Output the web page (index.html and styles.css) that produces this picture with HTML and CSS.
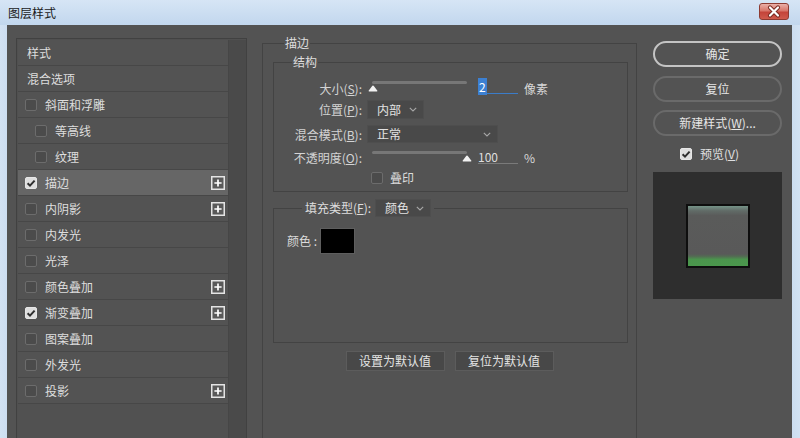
FILE: index.html
```html
<!DOCTYPE html>
<html lang="zh-CN">
<head>
<meta charset="utf-8">
<title>图层样式</title>
<link rel="stylesheet" href="styles.css">
</head>
<body>
<div class="window">
  <div class="titlebar">
    <span class="title">图层样式</span>
    <div class="close">
      <svg width="30" height="17" viewBox="0 0 30 17">
        <path d="M11 4.5 L19 12.5 M19 4.5 L11 12.5" stroke="#7a2a22" stroke-width="4.2" stroke-linecap="round"/>
        <path d="M11 4.5 L19 12.5 M19 4.5 L11 12.5" stroke="#ffffff" stroke-width="2.2" stroke-linecap="round"/>
      </svg>
    </div>
  </div>
  <div class="client">
    <div class="styles-panel">
      <ul class="style-list">
        <li class="row plain">样式</li>
        <li class="row plain">混合选项</li>
        <li class="row"><span class="cb"></span><span class="name">斜面和浮雕</span></li>
        <li class="row sub"><span class="cb"></span><span class="name">等高线</span></li>
        <li class="row sub"><span class="cb"></span><span class="name">纹理</span></li>
        <li class="row selected"><span class="cb checked"><svg width="12" height="12" viewBox="0 0 12 12"><path d="M2.6 6.2 L5 8.6 L9.6 3.6" fill="none" stroke="#2f2f2f" stroke-width="2"/></svg></span><span class="name">描边</span><span class="plus"><svg width="14" height="14" viewBox="0 0 14 14"><rect x="0.75" y="0.75" width="12.5" height="12.5" fill="#595959" stroke="#e4e4e4" stroke-width="1.5"/><path d="M7 3.4 V10.6 M3.4 7 H10.6" stroke="#ffffff" stroke-width="1.7"/></svg></span></li>
        <li class="row"><span class="cb"></span><span class="name">内阴影</span><span class="plus"><svg width="14" height="14" viewBox="0 0 14 14"><rect x="0.75" y="0.75" width="12.5" height="12.5" fill="#595959" stroke="#e4e4e4" stroke-width="1.5"/><path d="M7 3.4 V10.6 M3.4 7 H10.6" stroke="#ffffff" stroke-width="1.7"/></svg></span></li>
        <li class="row"><span class="cb"></span><span class="name">内发光</span></li>
        <li class="row"><span class="cb"></span><span class="name">光泽</span></li>
        <li class="row"><span class="cb"></span><span class="name">颜色叠加</span><span class="plus"><svg width="14" height="14" viewBox="0 0 14 14"><rect x="0.75" y="0.75" width="12.5" height="12.5" fill="#595959" stroke="#e4e4e4" stroke-width="1.5"/><path d="M7 3.4 V10.6 M3.4 7 H10.6" stroke="#ffffff" stroke-width="1.7"/></svg></span></li>
        <li class="row"><span class="cb checked"><svg width="12" height="12" viewBox="0 0 12 12"><path d="M2.6 6.2 L5 8.6 L9.6 3.6" fill="none" stroke="#2f2f2f" stroke-width="2"/></svg></span><span class="name">渐变叠加</span><span class="plus"><svg width="14" height="14" viewBox="0 0 14 14"><rect x="0.75" y="0.75" width="12.5" height="12.5" fill="#595959" stroke="#e4e4e4" stroke-width="1.5"/><path d="M7 3.4 V10.6 M3.4 7 H10.6" stroke="#ffffff" stroke-width="1.7"/></svg></span></li>
        <li class="row"><span class="cb"></span><span class="name">图案叠加</span></li>
        <li class="row"><span class="cb"></span><span class="name">外发光</span></li>
        <li class="row"><span class="cb"></span><span class="name">投影</span><span class="plus"><svg width="14" height="14" viewBox="0 0 14 14"><rect x="0.75" y="0.75" width="12.5" height="12.5" fill="#595959" stroke="#e4e4e4" stroke-width="1.5"/><path d="M7 3.4 V10.6 M3.4 7 H10.6" stroke="#ffffff" stroke-width="1.7"/></svg></span></li>
      </ul>
      <div class="scroll"></div>
    </div>

    <fieldset class="group outer">
      <legend class="lg-outer">描边</legend>
      <fieldset class="group inner">
        <legend class="lg-inner">结构</legend>
        <div class="form">
          <div class="frow r-size">
            <span class="lbl">大小(<u>S</u>):</span>
            <div class="slider"><span class="track"></span><span class="thumb" style="left:-4px"><svg width="10" height="7" viewBox="0 0 10 7"><path d="M5 0.5 Q5.6 0.5 6 1.2 L9.4 5.8 Q9.6 6.6 8.8 6.6 L1.2 6.6 Q0.4 6.6 0.6 5.8 L4 1.2 Q4.4 0.5 5 0.5 Z" fill="#f2f2f2"/></svg></span></div>
            <span class="num active"><span class="hl">2</span></span>
            <span class="unit">像素</span>
          </div>
          <div class="frow r-pos">
            <span class="lbl">位置(<u>P</u>):</span>
            <div class="select w-pos"><span>内部</span><svg width="8" height="5" viewBox="0 0 8 5"><path d="M0.8 0.8 L4 4 L7.2 0.8" fill="none" stroke="#a8a8a8" stroke-width="1.1"/></svg></div>
          </div>
          <div class="frow r-mode">
            <span class="lbl">混合模式(<u>B</u>):</span>
            <div class="select w-mode"><span>正常</span><svg width="8" height="5" viewBox="0 0 8 5"><path d="M0.8 0.8 L4 4 L7.2 0.8" fill="none" stroke="#a8a8a8" stroke-width="1.1"/></svg></div>
          </div>
          <div class="frow r-opacity">
            <span class="lbl">不透明度(<u>O</u>):</span>
            <div class="slider"><span class="track"></span><span class="thumb" style="left:90px"><svg width="10" height="7" viewBox="0 0 10 7"><path d="M5 0.5 Q5.6 0.5 6 1.2 L9.4 5.8 Q9.6 6.6 8.8 6.6 L1.2 6.6 Q0.4 6.6 0.6 5.8 L4 1.2 Q4.4 0.5 5 0.5 Z" fill="#f2f2f2"/></svg></span></div>
            <span class="num">100</span>
            <span class="unit">%</span>
          </div>
          <div class="frow r-over">
            <span class="cb"></span><span class="name">叠印</span>
          </div>
        </div>
      </fieldset>

      <fieldset class="group fill">
        <legend class="lg-fill"><span>填充类型(<u>F</u>):</span><div class="select w-fill"><span>颜色</span><svg width="8" height="5" viewBox="0 0 8 5"><path d="M0.8 0.8 L4 4 L7.2 0.8" fill="none" stroke="#a8a8a8" stroke-width="1.1"/></svg></div></legend>
        <div class="fill-body">
          <div class="color-row"><span>颜色 :</span><span class="swatch"></span></div>
        </div>
      </fieldset>

      <div class="defaults">
        <button class="btn-flat">设置为默认值</button>
        <button class="btn-flat">复位为默认值</button>
      </div>
    </fieldset>

    <div class="actions">
      <button class="pill primary">确定</button>
      <button class="pill">复位</button>
      <button class="pill">新建样式(<u>W</u>)...</button>
      <div class="preview-toggle"><span class="cb checked"><svg width="12" height="12" viewBox="0 0 12 12"><path d="M2.6 6.2 L5 8.6 L9.6 3.6" fill="none" stroke="#2f2f2f" stroke-width="2"/></svg></span><span class="name">预览(<u>V</u>)</span></div>
      <div class="preview"><div class="swatch-preview"></div></div>
    </div>
  </div>
</div>
</body>
</html>
```

FILE: styles.css
```css
* { box-sizing: border-box; }
html, body { margin: 0; padding: 0; }
body {
  width: 800px;
  height: 438px;
  overflow: hidden;
  font-family: "Noto Sans CJK SC", "Noto Sans", sans-serif;
  font-size: 12px;
  color: #dcdcdc;
}
u { text-decoration: underline; text-underline-offset: 1px; }

.window {
  width: 800px;
  height: 438px;
  display: flex;
  flex-direction: column;
  background: linear-gradient(90deg, #d2e2f3 0, #bfd4eb 3%, #bfd4eb 97%, #d2e2f3 100%);
}
.titlebar {
  height: 25px;
  flex: none;
  display: flex;
  align-items: center;
  justify-content: space-between;
  padding: 0 11px 0 8px;
  background: linear-gradient(#d6e5f5, #c2d7ee);
}
.title {
  color: #1a1a1a;
  font-size: 12px;
  line-height: 14px;
}
.close {
  width: 30px;
  height: 17px;
  margin-top: -3px;
  border: 1px solid #8e3b32;
  border-radius: 3px;
  background: linear-gradient(#eab0a8 0%, #d8766a 45%, #c4443a 55%, #cf5a4c 100%);
  display: flex;
}
.close svg { margin: -1px; }

.client {
  flex: 1;
  margin: 0 8px 0 7px;
  background: #535353;
  display: flex;
  align-items: flex-start;
  overflow: hidden;
}

/* left list */
.styles-panel {
  margin: 13px 0 0 9px;
  width: 231px;
  height: 420px;
  flex: none;
  border: 1px solid #414141;
  padding: 1px;
  display: flex;
  background: #505050;
}
.style-list {
  list-style: none;
  margin: 0;
  padding: 0;
  width: 210px;
  flex: none;
  background: #515151;
}
.scroll {
  width: 18px;
  flex: none;
  background: #4a4a4a;
  border-left: 1px solid #464646;
}
.row {
  height: 26px;
  display: flex;
  align-items: center;
  padding: 0 3px 0 7px;
  background: #535353;
  border-bottom: 1px solid #474747;
  color: #dedede;
  line-height: 16px;
}
.row.plain { padding-left: 9px; }
.row.sub { padding-left: 17px; }
.row.selected { background: #666666; }
.row .name { margin-left: 8px; flex: 1; }
.plus { width: 14px; height: 14px; display: flex; }

.cb {
  width: 12px;
  height: 12px;
  flex: none;
  border: 1px solid #6c6c6c;
  border-radius: 2px;
  background: #4b4b4b;
  display: flex;
}
.cb.checked {
  background: #dedede;
  border-color: #e6e6e6;
}
.cb.checked svg { margin: -1px; }

/* middle */
.group {
  margin: 0;
  padding: 0;
  min-width: 0;
  border: 1px solid #434343;
}
.group legend {
  line-height: 16px;
  color: #dedede;
}
.outer {
  margin: 10px 0 0 15px;
  width: 375px;
  height: 430px;
  flex: none;
}
.lg-outer { margin-left: 21px; padding: 0 1px; }
.inner { margin: 3px 8px 0 10px; }
.lg-inner { margin-left: 18px; padding: 0 1px; }
.form { padding: 8px 0 3px 0; }

.frow {
  display: flex;
  align-items: flex-start;
  height: 20px;
}
.lbl {
  width: 88px;
  flex: none;
  text-align: right;
  line-height: 20px;
  margin-right: 5px;
  color: #d4d4d4;
}
.r-size { height: 22px; }
.r-size .lbl, .r-size .unit { line-height: 22px; }
.r-mode { margin-top: 5px; }
.r-opacity { margin-top: 3px; }
.r-over { align-items: center; padding-left: 97px; }
.r-over .name { margin-left: 7px; line-height: 16px; }

.slider {
  position: relative;
  width: 95px;
  height: 100%;
  margin-left: 5px;
  flex: none;
}
.track {
  position: absolute;
  left: 0;
  right: 0;
  top: 3px;
  height: 3px;
  border-radius: 2px;
  background: #777777;
}
.thumb {
  position: absolute;
  top: 7px;
  width: 10px;
  height: 7px;
  display: flex;
}
.num {
  width: 40px;
  height: 14px;
  margin: 2px 0 0 11px;
  border-bottom: 1px solid #7a7a7a;
  line-height: 13px;
  flex: none;
  color: #dedede;
}
.num.active { border-bottom-color: #3b7cc8; }
.hl { background: #3c80d2; color: #ffffff; padding: 0 1px; }
.unit { margin-left: 6px; line-height: 20px; color: #d8d8d8; }

.select {
  height: 19px;
  display: flex;
  align-items: center;
  justify-content: space-between;
  background: #494949;
  border: 1px solid #4e4e4e;
  padding: 0 6px 0 9px;
  color: #e2e2e2;
  line-height: 16px;
}
.w-pos { width: 57px; }
.w-mode { width: 131px; height: 18px; }
.w-fill { width: 56px; height: 18px; }

.fill { margin: 7px 8px 0 10px; }
.lg-fill {
  margin-left: 28px;
  padding: 0 3px;
  display: flex;
  align-items: center;
  gap: 4px;
  height: 18px;
}
.fill-body {
  height: 125px;
  padding: 11px 0 0 13px;
}
.color-row {
  display: flex;
  align-items: center;
  gap: 3px;
  line-height: 16px;
}
.swatch {
  width: 35px;
  height: 26px;
  background: #000000;
  border: 1px solid #5e5e5e;
}

.defaults {
  display: flex;
  justify-content: center;
  gap: 10px;
  margin-top: 8px;
}
.btn-flat {
  width: 99px;
  height: 20px;
  padding: 0;
  font: inherit;
  font-size: 12px;
  line-height: 16px;
  color: #e4e4e4;
  background: #484848;
  border: 1px solid #5c5c5c;
}

/* right */
.actions {
  margin: 16px 0 0 16px;
  width: 129px;
  flex: none;
  display: flex;
  flex-direction: column;
}
.pill {
  height: 26px;
  padding: 0;
  font: inherit;
  font-size: 12px;
  line-height: 16px;
  color: #e6e6e6;
  background: transparent;
  border: 2px solid #6a6a6a;
  border-radius: 13px;
  margin-bottom: 8px;
}
.pill.primary { border-color: #c4c4c4; margin-bottom: 9px; }
.preview-toggle {
  height: 18px;
  margin-top: 1px;
  padding-left: 27px;
  display: flex;
  align-items: center;
}
.preview-toggle .name { margin-left: 8px; line-height: 16px; color: #e0e0e0; }
.preview {
  margin-top: 9px;
  height: 127px;
  background: #2e2e2e;
  display: flex;
  align-items: center;
  justify-content: center;
}
.swatch-preview {
  width: 64px;
  height: 64px;
  border: 2px solid #0e0e0e;
  background: linear-gradient(#769488 0%, #616b67 8%, #5a5b5a 16%, #595959 80%, #536c53 84%, #4b944d 89%, #4a974c 100%);
}
```
